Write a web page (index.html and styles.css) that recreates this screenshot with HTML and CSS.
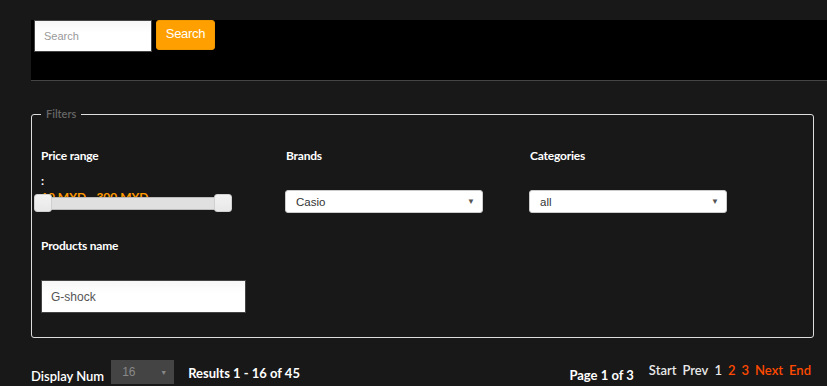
FILE: index.html
```html
<!DOCTYPE html>
<html>
<head>
<meta charset="utf-8">
<link rel="stylesheet" href="styles.css">
</head>
<body>
<div class="topbar">
  <form class="search">
    <input class="search-input" type="text" placeholder="Search">
    <button class="search-btn" type="button">Search</button>
  </form>
</div>

<fieldset class="filters">
  <legend>Filters</legend>
  <div class="grid">
    <div class="col">
      <div class="label">Price range</div>
      <div class="colon">:</div>
      <div class="range-text">10 MYD - 300 MYD</div>
      <div class="slider">
        <span class="handle h-left"></span>
        <span class="handle h-right"></span>
      </div>
    </div>
    <div class="col">
      <div class="label">Brands</div>
      <div class="select"><span>Casio</span><span class="arrow">▼</span></div>
    </div>
    <div class="col">
      <div class="label">Categories</div>
      <div class="select"><span>all</span><span class="arrow">▼</span></div>
    </div>
    <div class="col">
      <div class="label">Products name</div>
      <div class="name-input">G-shock</div>
    </div>
  </div>
</fieldset>

<div class="footer">
  <div class="left">
    <span class="disp">Display Num</span>
    <div class="num-select"><span>16</span><span class="arrow">▼</span></div>
    <span class="results">Results 1 - 16 of 45</span>
  </div>
  <div class="right">
    <span class="page">Page 1 of 3</span>
    <nav class="pager">
      <span>Start</span><span>Prev</span><span>1</span><a>2</a><a>3</a><a>Next</a><a>End</a>
    </nav>
  </div>
</div>
</body>
</html>
```

FILE: styles.css
```css
* { box-sizing: border-box; }
html, body { margin: 0; padding: 0; }
body {
  background: #181818;
  width: 827px;
  height: 386px;
  overflow: hidden;
  font-family: "Lato", "Noto Sans", sans-serif;
  color: #fff;
}

.topbar {
  margin: 20px 0 0 31px;
  height: 61px;
  background: #000;
  border-bottom: 1px solid #444;
}
.search { display: flex; align-items: flex-start; gap: 4px; padding-left: 3px; }
.search-input {
  width: 118px;
  height: 32px;
  border: 1px solid #444;
  background: linear-gradient(#f6f6f6, #fff 40%);
  font-family: "Liberation Sans", Arial, sans-serif;
  font-size: 11px;
  padding: 0 9px;
  margin: 0;
  outline: none;
}
.search-input::placeholder { color: #999; }
.search-btn {
  width: 59px;
  height: 30px;
  margin: 0;
  background: #ffa000;
  border: 1px solid #f29800;
  border-radius: 3px;
  color: #fff;
  font-family: "Liberation Sans", Arial, sans-serif;
  font-size: 13px;
  letter-spacing: -0.3px;
  padding: 0 0 3px;
}

.filters {
  margin: 26px 0 0 31px;
  width: 783px;
  height: 231px;
  border: 1px solid #ddd;
  border-radius: 3px;
  padding: 0 9px;
}
.filters legend {
  padding: 0 5px;
  color: #666;
  font-size: 11px;
  font-weight: 600;
  line-height: 14px;
  margin-left: 0;
}
.grid {
  display: grid;
  grid-template-columns: 245px 244px 244px;
  grid-auto-rows: auto;
}
.col { display: flex; flex-direction: column; align-items: flex-start; }
.label {
  font-size: 12px;
  font-weight: 700;
  line-height: 14px;
  margin-top: 28px;
  letter-spacing: -0.2px;
}
.colon { font-size: 12px; font-weight: 700; line-height: 14px; margin-top: 11px; }
.range-text {
  color: #ff9a00;
  font-size: 12px;
  font-weight: 700;
  line-height: 14px;
  margin-top: 2px;
  height: 14px;
}
.slider {
  position: relative;
  margin: -7px 0 0 -7px;
  width: 197px;
  height: 13px;
  background: #e0e0e0;
  border: 1px solid #bbb;
  border-radius: 2px;
}
.handle {
  position: absolute;
  top: -4px;
  width: 18px;
  height: 18px;
  background: linear-gradient(#f2f2f2, #e8e8e8);
  border: 1px solid #d0d0d0;
  border-radius: 3px;
}
.h-left { left: -1px; }
.h-right { right: -2px; }

.select {
  margin-top: 27px;
  margin-left: -1px;
  width: 198px;
  height: 23px;
  background: #fff;
  border: 1px solid #ccc;
  border-radius: 3px;
  display: flex;
  align-items: center;
  justify-content: space-between;
  padding: 0 7px 0 10px;
  font-family: "Liberation Sans", Arial, sans-serif;
  font-size: 11.5px;
  color: #333;
}
.arrow { font-size: 8px; color: #555; }

.col:nth-child(4) .label { margin-top: 26px; }
.name-input {
  margin-top: 27px;
  width: 205px;
  height: 33px;
  background: linear-gradient(#f6f6f6, #fff 40%);
  border: 1px solid #444;
  font-family: "Liberation Sans", Arial, sans-serif;
  font-size: 12px;
  color: #555;
  padding: 9px 0 0 9px;
}

.footer {
  margin: 22px 0 0 31px;
  width: 780px;
  display: flex;
  justify-content: space-between;
  align-items: flex-end;
}
.left, .right { display: flex; align-items: flex-end; }
.disp { font-size: 13px; font-weight: 600; line-height: 16px; margin-bottom: 0; }
.num-select {
  margin-left: 7px;
  width: 63px;
  height: 24px;
  background: #444;
  display: flex;
  align-items: center;
  justify-content: space-between;
  padding: 0 7px 0 11px;
  font-family: "Liberation Sans", Arial, sans-serif;
  font-size: 12px;
  color: #888;
}
.num-select .arrow { color: #888; font-size: 7px; }
.results { margin-left: 14px; font-size: 13px; font-weight: 700; line-height: 16px; margin-bottom: 3px; }
.page { font-size: 13px; font-weight: 700; line-height: 16px; margin-bottom: 1px; }
.pager { display: flex; gap: 6px; margin-left: 15px; font-size: 13px; line-height: 16px; margin-bottom: 6px; font-weight: 600; }
.pager span { color: #e8e8e8; }
.pager a { color: #ff4a00; }
```
